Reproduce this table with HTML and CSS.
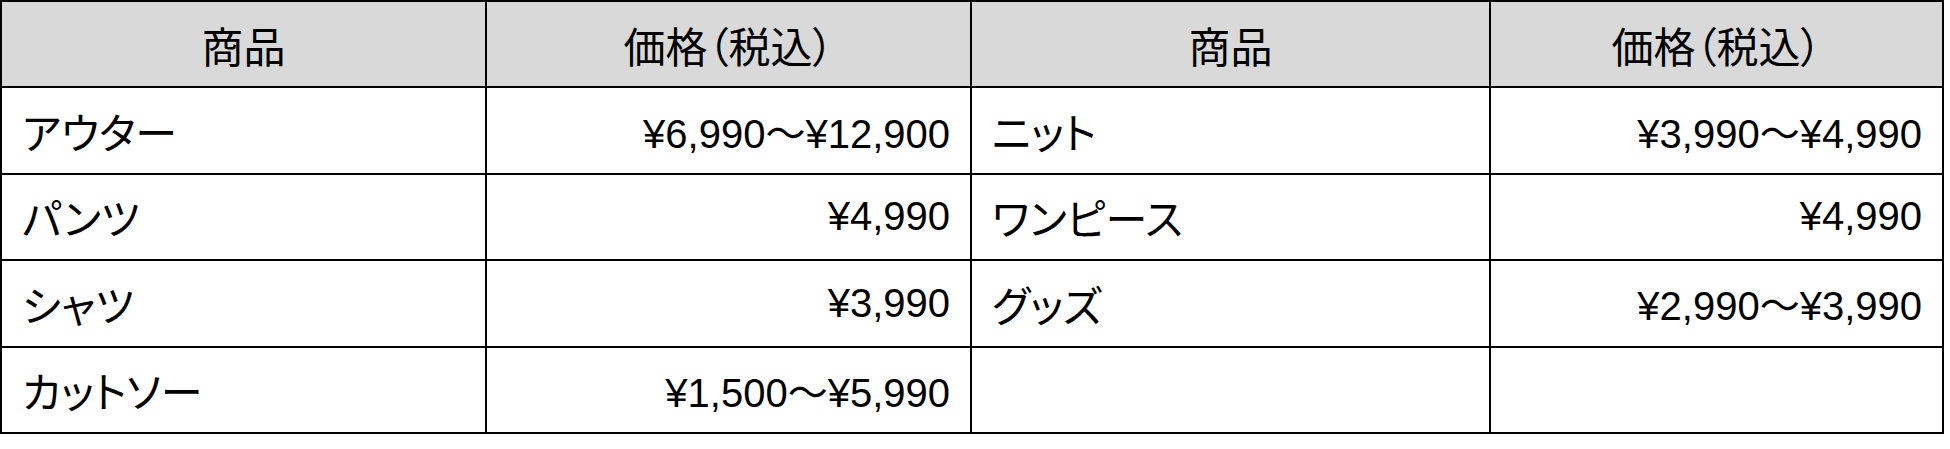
FILE: index.html
```html
<!DOCTYPE html>
<html lang="ja">
<head>
<meta charset="utf-8">
<title>価格表</title>
<link rel="stylesheet" href="styles.css">
</head>
<body>
<table class="price-table">
  <colgroup>
    <col class="c1"><col class="c2"><col class="c3"><col class="c4">
  </colgroup>
  <thead>
    <tr>
      <th>商品</th><th>価格（税込）</th><th>商品</th><th>価格（税込）</th>
    </tr>
  </thead>
  <tbody>
    <tr>
      <td class="name">アウター</td><td class="price">¥6,990～¥12,900</td>
      <td class="name">ニット</td><td class="price">¥3,990～¥4,990</td>
    </tr>
    <tr>
      <td class="name">パンツ</td><td class="price">¥4,990</td>
      <td class="name">ワンピース</td><td class="price">¥4,990</td>
    </tr>
    <tr>
      <td class="name">シャツ</td><td class="price">¥3,990</td>
      <td class="name">グッズ</td><td class="price">¥2,990～¥3,990</td>
    </tr>
    <tr>
      <td class="name">カットソー</td><td class="price">¥1,500～¥5,990</td>
      <td class="name"></td><td class="price"></td>
    </tr>
  </tbody>
</table>
</body>
</html>
```
FILE: styles.css
```css
html, body {
  margin: 0;
  padding: 0;
  background: #ffffff;
}

.price-table {
  border-collapse: collapse;
  table-layout: fixed;
  width: 1942px;
  font-family: "Liberation Sans", "Noto Sans CJK JP", sans-serif;
  color: #000000;
}

.c1 { width: 485px; }
.c2 { width: 485px; }
.c3 { width: 519px; }
.c4 { width: 453px; }

.price-table th,
.price-table td {
  border: 2px solid #000000;
  padding: 0 20px;
  height: 86px;
  box-sizing: border-box;
  white-space: nowrap;
  vertical-align: middle;
}

.price-table tr {
  height: 86.4px;
}

.price-table th {
  background: #d9d9d9;
  font-weight: normal;
  font-size: 42px;
  text-align: center;
  font-feature-settings: "palt";
}

.price-table td {
  font-size: 40px;
}

.name {
  text-align: left;
  font-size: 42px;
  font-feature-settings: "palt";
}

.price-table td.name {
  font-size: 42px;
}

.price {
  text-align: right;
}
```
